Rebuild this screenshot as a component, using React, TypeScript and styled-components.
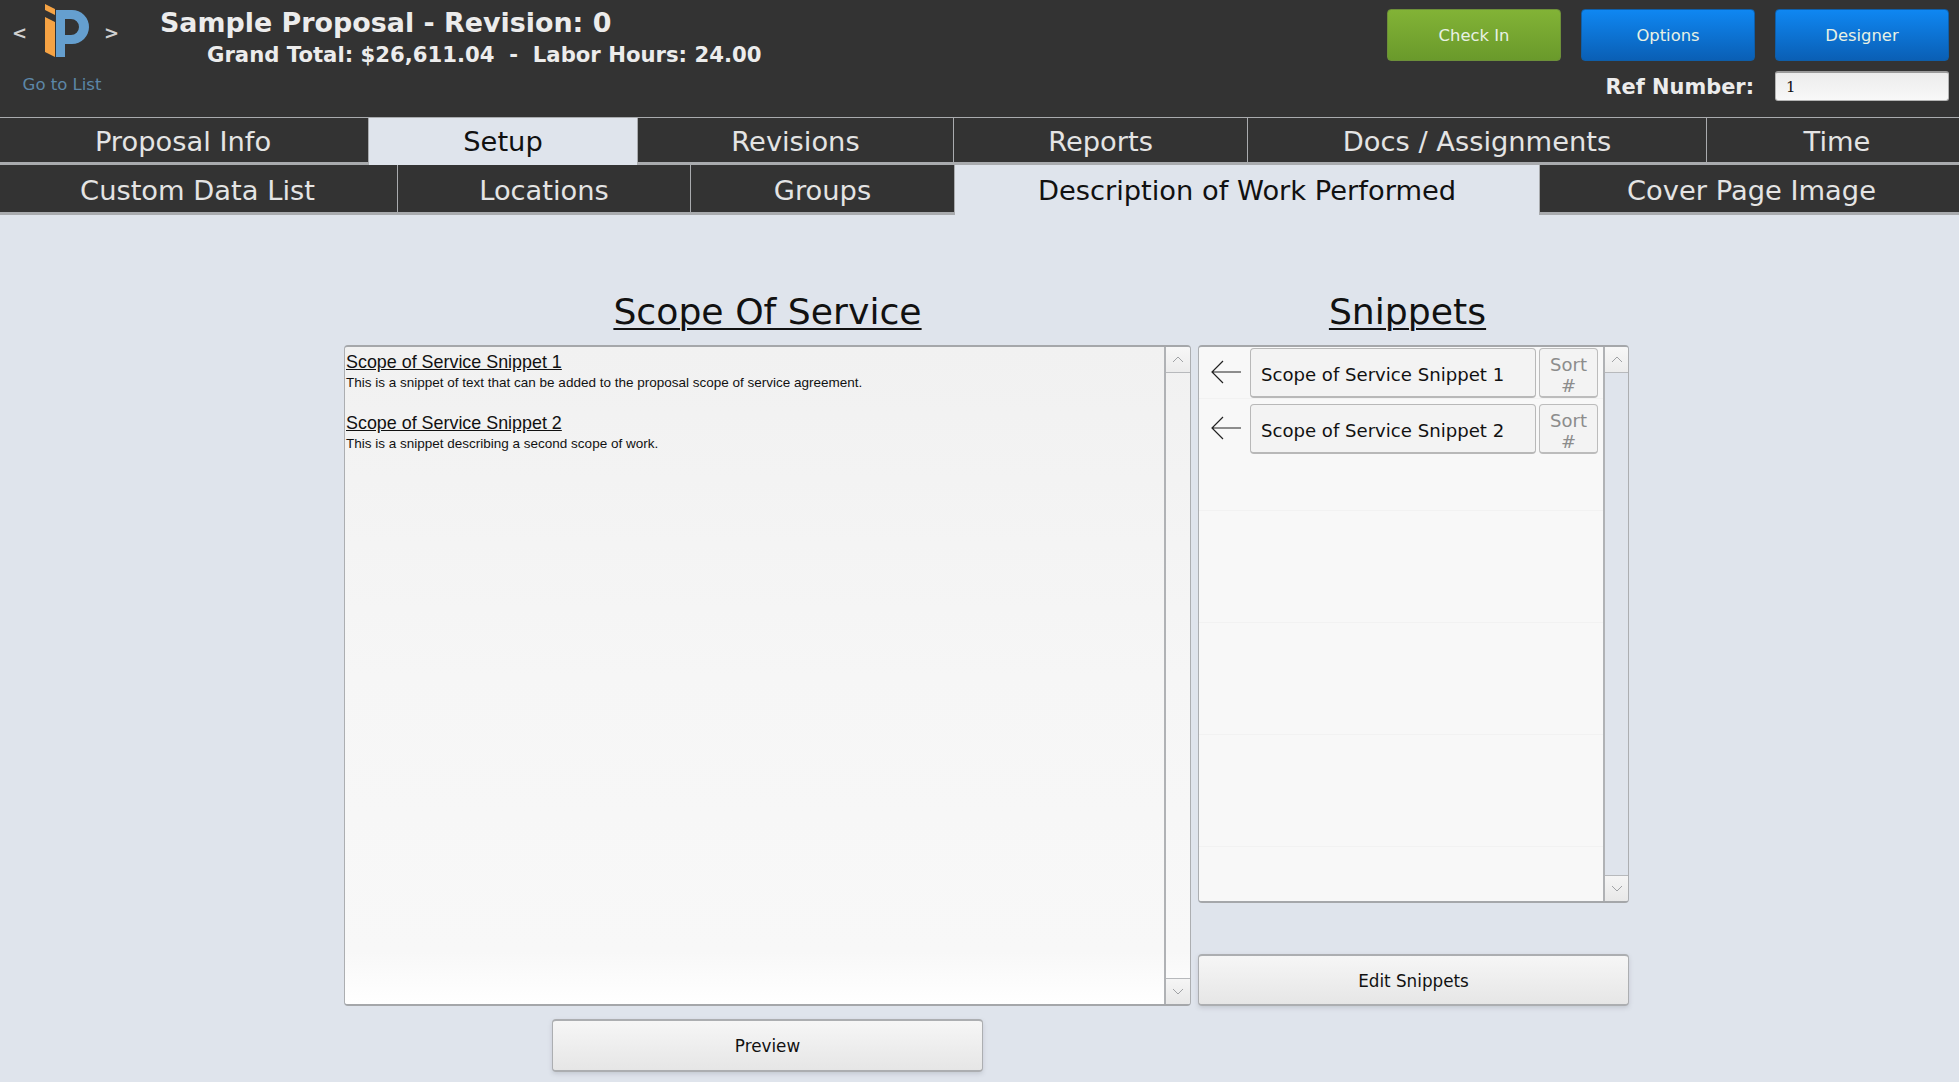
import React from 'react';
import styled, { createGlobalStyle } from 'styled-components';

const GlobalStyle = createGlobalStyle`
    html, body {
        margin: 0;
        padding: 0;
        height: 100%;
        background: #dfe4ec;
        font-family: "DejaVu Sans", Verdana, sans-serif;
    }
`;

const Page = styled.div`
    width: 1959px;
    height: 1082px;
    overflow: hidden;
    background: #dfe4ec;
`;

const Header = styled.header`
    height: 117px;
    box-sizing: border-box;
    background: #333333;
    display: flex;
    color: #ececec;
`;

const LogoBlock = styled.div`
    width: 124px;
    flex: none;
    padding-top: 2px;
    display: flex;
    flex-direction: column;
    align-items: center;
`;

const LogoRow = styled.div`
    display: flex;
    align-items: center;
    align-self: flex-start;
    height: 59px;
    padding-left: 12px;
`;

const Chevron = styled.span<{ $left: number; $right: number }>`
    font-size: 18px;
    font-weight: bold;
    color: #d0d0d0;
    line-height: 1;
    margin: 2px ${p => p.$right}px 0 ${p => p.$left}px;
`;

const GoToList = styled.a`
    margin-top: 14px;
    font-size: 16.5px;
    color: #5d87a8;
`;

const Titles = styled.div`
    flex: 1;
    padding: 7px 0 0 36px;
`;

const Title = styled.div`
    font-size: 26.9px;
    font-weight: bold;
    line-height: 32px;
    white-space: nowrap;
`;

const SubTitle = styled.div`
    margin: 4px 0 0 47px;
    font-size: 21.2px;
    font-weight: bold;
    line-height: 24px;
    white-space: pre;
`;

const Actions = styled.div`
    width: 562px;
    flex: none;
    padding: 9px 10px 0 0;
    box-sizing: border-box;
    display: flex;
    flex-direction: column;
    align-items: flex-end;
`;

const ActionButtons = styled.div`
    display: flex;
    gap: 20px;
`;

const ActionButton = styled.button<{ $color: 'green' | 'blue' }>`
    width: 174px;
    height: 52px;
    box-sizing: border-box;
    border: 1px solid ${p => (p.$color === 'green' ? '#6d8f3a' : '#0f5ea8')};
    border-radius: 4px;
    background: ${p =>
        p.$color === 'green'
            ? 'linear-gradient(#82b336, #6a9a2b)'
            : 'linear-gradient(#0f87f2, #0a5fb5)'};
    color: #e8f1e4;
    font-family: inherit;
    font-size: 16.4px;
    padding: 0;
`;

const RefRow = styled.div`
    margin-top: 10px;
    display: flex;
    align-items: center;
    gap: 21px;
`;

const RefLabel = styled.label`
    font-size: 20.9px;
    font-weight: bold;
    margin-top: 2px;
`;

const RefInput = styled.div`
    width: 174px;
    height: 30px;
    box-sizing: border-box;
    border: 1px solid #b4b4b4;
    border-top: 2px solid #9a9a9a;
    border-radius: 3px;
    background: linear-gradient(#ececec, #f8f8f8);
    color: #111;
    font-family: "DejaVu Serif", serif;
    font-size: 15px;
    line-height: 28px;
    padding-left: 10px;
`;

const TabRow = styled.nav<{ $height: number }>`
    display: flex;
    height: ${p => p.$height}px;
    box-sizing: border-box;
    background: #333333;
    border-bottom: 3px solid #a9abae;
`;

const RowOne = styled(TabRow)`
    border-top: 1px solid #a9abae;
`;

const Tab = styled.div<{ $width: number; $active?: boolean; $nudge?: number }>`
    flex: ${p => (p.$width ? `0 0 ${p.$width}px` : '1')};
    box-sizing: border-box;
    display: flex;
    align-items: center;
    justify-content: center;
    font-size: 27.3px;
    white-space: nowrap;
    padding-top: 3px;
    padding-left: ${p => Math.max(p.$nudge || 0, 0)}px;
    padding-right: ${p => Math.max(-(p.$nudge || 0), 0)}px;
    color: ${p => (p.$active ? '#111' : '#e4e4e4')};
    background: ${p => (p.$active ? '#dfe4ec' : 'transparent')};
    border-right: 1px solid #a9abae;
    ${p => (p.$active ? 'margin-bottom: -3px; padding-bottom: 3px;' : '')}
    &:last-child {
        border-right: 0 none;
    }
`;

const Main = styled.main`
    display: grid;
    grid-template-columns: 847px 431px;
    column-gap: 7px;
    padding-left: 344px;
`;

const Column = styled.section`
    display: flex;
    flex-direction: column;
`;

const Heading = styled.h2<{ $shift?: number }>`
    margin: 0;
    height: 130px;
    box-sizing: border-box;
    padding-top: 74px;
    text-align: center;
    font-size: 36.2px;
    line-height: 46px;
    font-weight: normal;
    text-decoration: underline;
    text-decoration-thickness: 2px;
    text-underline-offset: 4px;
    color: #111;
    position: relative;
    left: ${p => p.$shift || 0}px;
`;

const Panel = styled.div<{ $height: number }>`
    height: ${p => p.$height}px;
    box-sizing: border-box;
    display: flex;
    border: 1px solid #acaeb1;
    border-top: 2px solid #a5a7aa;
    border-bottom: 2px solid #a5a7aa;
    border-radius: 4px;
    overflow: hidden;
`;

const PANEL_FILL = 'linear-gradient(#f1f1f1 0%, #f6f6f6 50%, #f8f8f8 92%, #ffffff 100%)';

const Document = styled.div`
    flex: 1;
    background: ${PANEL_FILL};
    font-family: "Liberation Sans", Arial, sans-serif;
    color: #111;
    padding-top: 3px;
    padding-left: 1px;
`;

const SnippetHead = styled.div`
    font-size: 17.9px;
    line-height: 24px;
    text-decoration: underline;
`;

const SnippetBody = styled.div`
    font-size: 13.5px;
    line-height: 17px;
    margin-bottom: 20px;
`;

const Scrollbar = styled.div<{ $track: string }>`
    flex: 0 0 ${p => (p.$track === 'page' ? '25px' : '26px')};
    display: flex;
    flex-direction: column;
    justify-content: space-between;
    border-left: 2px solid #b0b2b5;
    box-sizing: border-box;
    background: ${p => (p.$track === 'page' ? '#dfe4ec' : PANEL_FILL)};
`;

const ScrollButton = styled.div<{ $down?: boolean }>`
    height: 25px;
    display: flex;
    align-items: center;
    justify-content: center;
    background: ${p => (p.$down ? 'linear-gradient(#f5f5f5, #e8e8e8)' : 'linear-gradient(#f7f7f7, #ececec)')};
    ${p => (p.$down ? 'border-top: 1px solid #b7b9bc;' : 'border-bottom: 1px solid #b7b9bc;')}
`;

const SnippetList = styled.div`
    flex: 1;
    min-width: 0;
    padding: 1px 4px 0 0;
    background: linear-gradient(#f8f8f8 111px, #f2f2f2 111px) 0 -60px / 100% 112px;
    display: flex;
    flex-direction: column;
    gap: 6px;
`;

const SnippetRow = styled.div`
    display: grid;
    grid-template-columns: 48px 286px 59px;
    grid-template-rows: 50px;
    column-gap: 3px;
    height: 50px;
`;

const ArrowCell = styled.div`
    display: flex;
    align-items: center;
    justify-content: flex-end;
    padding-right: 9px;
    margin-right: -3px;
    margin-top: -2px;
`;

const SnippetName = styled.div`
    box-sizing: border-box;
    border: 1px solid #b8b8b8;
    border-bottom: 2px solid #b8b8b8;
    border-radius: 4px;
    background: #f3f3f3;
    font-size: 18.1px;
    line-height: 51px;
    padding-left: 10px;
    color: #111;
    white-space: nowrap;
`;

const SortBox = styled.div`
    box-sizing: border-box;
    border: 1px solid #bcbcbc;
    border-bottom: 2px solid #bcbcbc;
    border-radius: 4px;
    background: #f3f3f3;
    color: #8c8c8c;
    font-size: 18px;
    line-height: 21px;
    text-align: center;
    padding-top: 5px;
`;

const PlainButton = styled.button<{ $preview?: boolean }>`
    width: 431px;
    height: ${p => (p.$preview ? '53px' : '52px')};
    box-sizing: border-box;
    border: 1px solid #acaeb1;
    border-top-width: 2px;
    border-bottom-width: 2px;
    border-radius: 4px;
    background: linear-gradient(#f6f6f6, #e6e6e6);
    box-shadow: 0 2px 4px rgba(120, 125, 135, 0.25);
    font-family: inherit;
    font-size: 16.8px;
    color: #111;
    padding: 1px 0 0;
    margin-top: ${p => (p.$preview ? '13px' : '51px')};
    align-self: ${p => (p.$preview ? 'center' : 'stretch')};
`;

const Caret = ({ down }: { down?: boolean }) => (
    <svg width="12" height="7" viewBox="0 0 12 7" fill="none" stroke="#a0a2a5" strokeWidth="1">
        <path d={down ? 'M1 1 L6 6 L11 1' : 'M1 6 L6 1 L11 6'} />
    </svg>
);

const Arrow = () => (
    <svg width="30" height="24" viewBox="0 0 30 24" fill="none" stroke="#222" strokeWidth="1.2">
        <path d="M30 12 H1 M12 1 L1 12 L12 23" />
    </svg>
);

const Logo = () => (
    <svg width="46" height="55" viewBox="45 4 46 55">
        <path fill="#f6a344" d="M45 4 L55 9 V15 L45 10 Z M45 17 L55 22 V57 L45 52 Z" />
        <path
            fill="#659fcf"
            fillRule="evenodd"
            d="M56 10 H72 A17 17 0 0 1 72 44 H65 V57 H56 Z M65 19 V35 H71 A8 8 0 0 0 71 19 Z"
        />
    </svg>
);

const ScrollBar = ({ track }: { track: string }) => (
    <Scrollbar $track={track}>
        <ScrollButton><Caret /></ScrollButton>
        <ScrollButton $down><Caret down /></ScrollButton>
    </Scrollbar>
);

const topTabs: [string, number, boolean?, number?][] = [
    ['Proposal Info', 369, false, -2],
    ['Setup', 269, true],
    ['Revisions', 316],
    ['Reports', 294],
    ['Docs / Assignments', 459],
    ['Time', 0, false, 8],
];

const subTabs: [string, number, boolean?, number?][] = [
    ['Custom Data List', 398, false, -2],
    ['Locations', 293],
    ['Groups', 264],
    ['Description of Work Performed', 585, true],
    ['Cover Page Image', 0, false, 4],
];

const App: React.FC = () => {
    return (
        <Page>
            <GlobalStyle />
            <Header>
                <LogoBlock>
                    <LogoRow>
                        <Chevron $left={0} $right={18}>&lt;</Chevron>
                        <Logo />
                        <Chevron $left={13} $right={0}>&gt;</Chevron>
                    </LogoRow>
                    <GoToList>Go to List</GoToList>
                </LogoBlock>
                <Titles>
                    <Title>Sample Proposal - Revision: 0</Title>
                    <SubTitle>Grand Total: $26,611.04  -  Labor Hours: 24.00</SubTitle>
                </Titles>
                <Actions>
                    <ActionButtons>
                        <ActionButton $color="green">Check In</ActionButton>
                        <ActionButton $color="blue">Options</ActionButton>
                        <ActionButton $color="blue">Designer</ActionButton>
                    </ActionButtons>
                    <RefRow>
                        <RefLabel>Ref Number:</RefLabel>
                        <RefInput>1</RefInput>
                    </RefRow>
                </Actions>
            </Header>
            <RowOne $height={48}>
                {topTabs.map(([label, width, active, nudge]) => (
                    <Tab key={label} $width={width} $active={active} $nudge={nudge}>{label}</Tab>
                ))}
            </RowOne>
            <TabRow $height={50}>
                {subTabs.map(([label, width, active, nudge]) => (
                    <Tab key={label} $width={width} $active={active} $nudge={nudge}>{label}</Tab>
                ))}
            </TabRow>
            <Main>
                <Column>
                    <Heading>Scope Of Service</Heading>
                    <Panel $height={661}>
                        <Document>
                            <SnippetHead>Scope of Service Snippet 1</SnippetHead>
                            <SnippetBody>This is a snippet of text that can be added to the proposal scope of service agreement.</SnippetBody>
                            <SnippetHead>Scope of Service Snippet 2</SnippetHead>
                            <SnippetBody>This is a snippet describing a second scope of work.</SnippetBody>
                        </Document>
                        <ScrollBar track="panel" />
                    </Panel>
                    <PlainButton $preview>Preview</PlainButton>
                </Column>
                <Column>
                    <Heading $shift={-6}>Snippets</Heading>
                    <Panel $height={558}>
                        <SnippetList>
                            {[1, 2].map(n => (
                                <SnippetRow key={n}>
                                    <ArrowCell><Arrow /></ArrowCell>
                                    <SnippetName>Scope of Service Snippet {n}</SnippetName>
                                    <SortBox>Sort<br />#</SortBox>
                                </SnippetRow>
                            ))}
                        </SnippetList>
                        <ScrollBar track="page" />
                    </Panel>
                    <PlainButton>Edit Snippets</PlainButton>
                </Column>
            </Main>
        </Page>
    );
};

export default App;
